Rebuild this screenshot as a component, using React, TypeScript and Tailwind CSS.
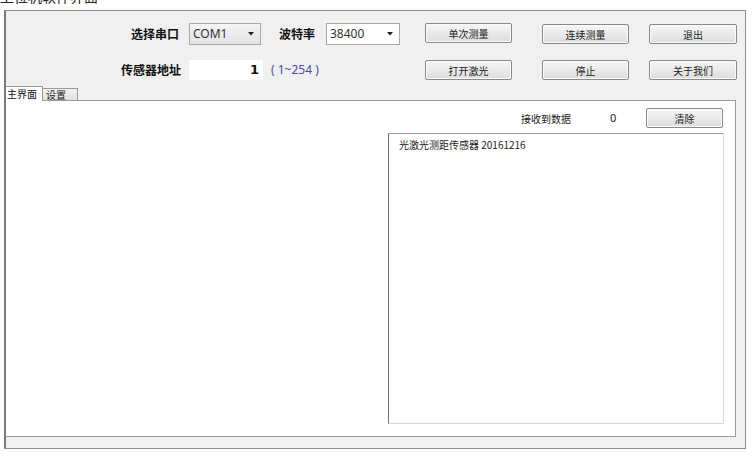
import React from "react";

const font = { fontFamily: '"Noto Sans CJK SC", "Noto Sans", sans-serif' };

function Btn({ label, className = "" }: { label: string; className?: string }) {
  return (
    <div
      className={`h-[20px] flex items-center justify-center border border-[#8a8a8a] rounded-[2px] bg-gradient-to-b from-[#f7f7f7] to-[#dddddd] text-[10px] text-[#222] shadow-[inset_0_0_0_1px_#fbfbfb] ${className}`}
    >
      {label}
    </div>
  );
}

function Combo({ value, className = "", bg = "bg-white" }: { value: string; className?: string; bg?: string }) {
  return (
    <div className={`h-[22px] flex items-center border border-[#a8a8a8] ${bg} pl-[3px] pr-[6px] ${className}`}>
      <span className="flex-1 text-[12px] text-[#333]" style={{ fontFamily: '"Noto Sans", sans-serif' }}>{value}</span>
      <svg width="6" height="4" viewBox="0 0 6 4">
        <path d="M0 0 L6 0 L3 3.5 Z" fill="#222" />
      </svg>
    </div>
  );
}

export default function App() {
  return (
    <div className="w-[752px] h-[457px] bg-white relative overflow-hidden" style={font}>
      <div className="h-[10px] overflow-hidden">
        <div className="text-[14px] leading-[16px] -mt-[12px] ml-[0px] text-[#222]">上位机软件界面</div>
      </div>
      <div className="ml-[4px] w-[742px] h-[439px] border border-[#8e8e8e] border-l-2 border-l-[#7a7a7a] bg-[#f0f0f0] flex flex-col">
        {/* Row 1 */}
        <div className="flex items-center mt-[12px] h-[22px]">
          <div className="w-[173px] text-right text-[12px] font-bold text-[#111]">选择串口</div>
          <Combo value="COM1" className="ml-[10px] w-[72px]" bg="bg-gradient-to-b from-[#f5f5f5] to-[#e2e2e2]" />
          <div className="ml-[18px] w-[36px] text-[12px] font-bold text-[#111]">波特率</div>
          <Combo value="38400" className="ml-[11px] w-[74px]" />
          <Btn label="单次测量" className="ml-[25px] w-[87px] -mt-[2px]" />
          <Btn label="连续测量" className="ml-[30px] w-[87px]" />
          <Btn label="退出" className="ml-[20px] w-[88px]" />
        </div>
        {/* Row 2 */}
        <div className="flex items-center mt-[15px] h-[20px]">
          <div className="w-[175px] text-right text-[12px] font-bold text-[#111]">传感器地址</div>
          <div className="ml-[8px] w-[74px] h-[20px] bg-white flex items-center justify-end pr-[4px] text-[13px] font-bold text-[#111]" style={{ fontFamily: '"DejaVu Sans", sans-serif' }}>
            1
          </div>
          <div className="ml-[8px] w-[154px] text-[12px] text-[#4a4aa8]" style={{ fontFamily: '"Noto Sans", "Noto Sans CJK SC", sans-serif' }}>
            ( 1~254 )
          </div>
          <Btn label="打开激光" className="w-[87px]" />
          <Btn label="停止" className="ml-[30px] w-[87px]" />
          <Btn label="关于我们" className="ml-[20px] w-[88px]" />
        </div>
        {/* Tabs */}
        <div className="flex items-end mt-[7px] h-[14px]">
          <div className="w-[37px] h-[15px] bg-white border border-b-0 border-[#9a9a9a] border-l-0 text-[10px] leading-[14px] pl-[1px] text-[#111] relative z-10">
            主界面
          </div>
          <div className="w-[35px] h-[13px] bg-gradient-to-b from-[#f2f2f2] to-[#e0e0e0] border border-b-0 border-l-0 border-[#9a9a9a] text-[10px] leading-[12px] pl-[3px] text-[#222]">
            设置
          </div>
        </div>
        {/* Panel */}
        <div className="w-[730px] h-[337px] bg-white border border-[#9a9a9a] border-l-0 -mt-[1px] flex flex-col">
          <div className="flex items-center justify-end mt-[7px] pr-[12px] h-[20px]">
            <div className="text-[10px] text-[#222]">接收到数据</div>
            <div className="ml-[39px] w-[36px] text-[11px] text-[#222]" style={{ fontFamily: '"Noto Sans", sans-serif' }}>0</div>
            <Btn label="清除" className="w-[77px] h-[19px]" />
          </div>
          <div className="ml-[382px] mt-[5px] w-[336px] h-[291px] border border-[#d8d8d8] border-l-[#6e6e6e] border-t-[#a0a0a0] bg-white pl-[10px] pt-[3px]">
            <div className="text-[10px] text-[#222]">光激光测距传感器 20161216</div>
          </div>
        </div>
      </div>
    </div>
  );
}
